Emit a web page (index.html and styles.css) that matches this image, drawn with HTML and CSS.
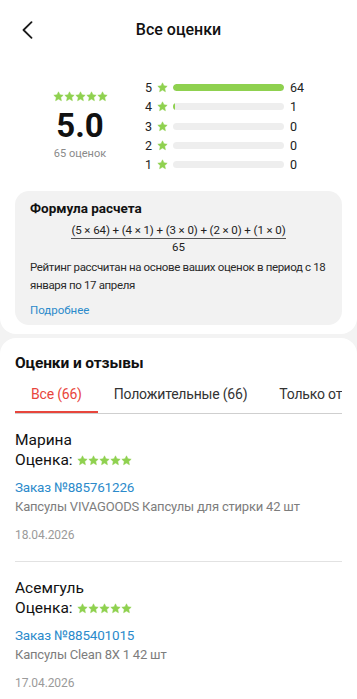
FILE: index.html
```html
<!DOCTYPE html>
<html lang="ru">
<head>
<meta charset="utf-8">
<title>Все оценки</title>
<link rel="stylesheet" href="styles.css">
</head>
<body>
<svg class="defs" width="0" height="0" aria-hidden="true">
  <defs>
    <symbol id="star" viewBox="0 0 24 24">
      <path d="M12 1.8l3.05 6.55 7.15.85-5.3 4.9 1.42 7.07L12 17.6l-6.32 3.57 1.42-7.07-5.3-4.9 7.15-.85z" stroke-linejoin="round" stroke-width="1.2" stroke="currentColor"/>
    </symbol>
  </defs>
</svg>

<div class="top">
  <header class="header">
    <svg class="back" width="12" height="18" viewBox="0 0 12 18"><path d="M10.5 1.2 2.5 9l8 7.8"/></svg>
    <h1 class="title">Все оценки</h1>
    <span></span>
  </header>

  <section class="summary">
    <div class="score">
      <div class="stars big">
        <svg><use href="#star"/></svg><svg><use href="#star"/></svg><svg><use href="#star"/></svg><svg><use href="#star"/></svg><svg><use href="#star"/></svg>
      </div>
      <div class="value">5.0</div>
      <div class="count">65 оценок</div>
    </div>
    <div class="dist">
      <div class="row"><span class="num">5</span><svg class="rstar"><use href="#star"/></svg><div class="track"><div class="fill" style="width:100%"></div></div><span class="cnt">64</span></div>
      <div class="row"><span class="num">4</span><svg class="rstar"><use href="#star"/></svg><div class="track"><div class="fill thin" style="width:2px"></div></div><span class="cnt">1</span></div>
      <div class="row"><span class="num">3</span><svg class="rstar"><use href="#star"/></svg><div class="track"></div><span class="cnt">0</span></div>
      <div class="row"><span class="num">2</span><svg class="rstar"><use href="#star"/></svg><div class="track"></div><span class="cnt">0</span></div>
      <div class="row"><span class="num">1</span><svg class="rstar"><use href="#star"/></svg><div class="track"></div><span class="cnt">0</span></div>
    </div>
  </section>

  <section class="formula">
    <h2 class="formula-title">Формула расчета</h2>
    <div class="fraction">
      <div class="numerator">(5 × 64) + (4 × 1) + (3 × 0) + (2 × 0) + (1 × 0)</div>
      <div class="denominator">65</div>
    </div>
    <p class="formula-text">Рейтинг рассчитан на основе ваших оценок в период с 18 января по 17 апреля</p>
    <a class="more">Подробнее</a>
  </section>
</div>

<div class="reviews">
  <h2 class="reviews-title">Оценки и отзывы</h2>
  <nav class="tabs">
    <span class="tab active">Все (66)</span>
    <span class="tab">Положительные (66)</span>
    <span class="tab">Только отзывы (12)</span>
  </nav>

  <article class="review">
    <div class="name">Марина</div>
    <div class="rating">Оценка:
      <span class="stars small"><svg><use href="#star"/></svg><svg><use href="#star"/></svg><svg><use href="#star"/></svg><svg><use href="#star"/></svg><svg><use href="#star"/></svg></span>
    </div>
    <a class="order">Заказ №885761226</a>
    <div class="product">Капсулы VIVAGOODS Капсулы для стирки 42 шт</div>
    <div class="date">18.04.2026</div>
  </article>

  <article class="review">
    <div class="name">Асемгуль</div>
    <div class="rating">Оценка:
      <span class="stars small"><svg><use href="#star"/></svg><svg><use href="#star"/></svg><svg><use href="#star"/></svg><svg><use href="#star"/></svg><svg><use href="#star"/></svg></span>
    </div>
    <a class="order">Заказ №885401015</a>
    <div class="product">Капсулы Clean 8X 1 42 шт</div>
    <div class="date">17.04.2026</div>
  </article>
</div>
</body>
</html>
```

FILE: styles.css
```css
* { box-sizing: border-box; }

html, body {
  margin: 0;
  padding: 0;
}

body {
  background: #f3f3f3;
  font-family: Roboto, "Noto Sans", "Liberation Sans", sans-serif;
  color: #111;
  width: 357px;
  height: 699px;
  overflow: hidden;
}

.defs { position: absolute; }

.top {
  background: #fff;
  border-radius: 0 0 16px 16px;
  padding-bottom: 9px;
}

.header {
  height: 60px;
  display: grid;
  grid-template-columns: 1fr auto 1fr;
  align-items: center;
  padding: 0 21px;
}

.back {
  fill: none;
  stroke: #1a1a1a;
  stroke-width: 1.8;
  stroke-linecap: round;
  stroke-linejoin: round;
}

.title {
  margin: 0;
  font-size: 16px;
  font-weight: 500;
  line-height: 20px;
  color: #111;
}

.summary {
  display: flex;
  align-items: center;
  padding: 18px 15px 0;
}

.score {
  width: 130px;
  display: flex;
  flex-direction: column;
  align-items: center;
}

.stars {
  display: inline-flex;
  color: #8fd14f;
}

.stars svg {
  fill: currentColor;
}

.stars.big svg {
  width: 11px;
  height: 11px;
}

.value {
  font-size: 33px;
  font-weight: 700;
  line-height: 36px;
  margin-top: 6px;
}

.count {
  font-size: 11px;
  line-height: 16px;
  color: #8a8a8a;
  margin-top: 2px;
}

.dist {
  display: flex;
  flex-direction: column;
}

.row {
  height: 19.3px;
  display: flex;
  align-items: center;
  font-size: 12.5px;
  color: #222;
}

.num {
  width: 8px;
}

.rstar {
  width: 11px;
  height: 11px;
  margin-left: 4px;
  fill: #8fd14f;
  color: #8fd14f;
}

.track {
  width: 111px;
  height: 7px;
  border-radius: 4px;
  background: #eeeeee;
  margin-left: 5px;
  overflow: hidden;
}

.fill {
  height: 100%;
  background: #8fd14f;
  border-radius: 4px;
}

.fill.thin {
  border-radius: 0;
}

.cnt {
  margin-left: 6px;
}

.formula {
  margin: 17px 15px 0;
  background: #f2f2f2;
  border-radius: 14px;
  padding: 8px 15px 6px;
}

.formula-title {
  margin: 0;
  font-size: 13.5px;
  font-weight: 700;
  line-height: 18px;
}

.fraction {
  display: flex;
  flex-direction: column;
  align-items: center;
  margin-top: 6px;
}

.numerator {
  font-size: 11.5px;
  letter-spacing: -0.1px;
  line-height: 15px;
  color: #222;
  border-bottom: 1px solid #555;
  white-space: nowrap;
}

.denominator {
  font-size: 11.5px;
  line-height: 16px;
  color: #222;
}

.formula-text {
  margin: 4px 0 0;
  font-size: 11.5px;
  letter-spacing: -0.35px;
  line-height: 17.5px;
  color: #2a2a2a;
}

.more {
  display: block;
  margin-top: 7px;
  font-size: 11.5px;
  line-height: 18px;
  color: #2b8acb;
}

.reviews {
  margin-top: 4px;
  background: #fff;
  border-radius: 16px 16px 0 0;
  padding: 14px 15px 0;
  min-height: 400px;
}

.reviews-title {
  margin: 0;
  font-size: 15.5px;
  letter-spacing: -0.1px;
  font-weight: 700;
  line-height: 22px;
}

.tabs {
  display: flex;
  margin-top: 10px;
  overflow: hidden;
  border-bottom: 1px solid #cfcfcf;
}

.tab {
  flex: none;
  padding: 0 16px 9px;
  font-size: 14px;
  letter-spacing: -0.2px;
  line-height: 20px;
  color: #333;
  white-space: nowrap;
}

.tab.active {
  color: #e8453c;
  box-shadow: inset 0 -3px 0 #e8453c;
  margin-bottom: -1px;
  padding-bottom: 10px;
}

.review {
  padding: 16px 0 16px;
  border-bottom: 1px solid #e2e2e2;
}

.name,
.rating {
  font-size: 15.5px;
  line-height: 20px;
  color: #111;
}

.rating {
  display: flex;
  align-items: center;
  gap: 4px;
}

.stars.small svg {
  width: 11px;
  height: 11px;
}

.order {
  display: block;
  margin-top: 7px;
  font-size: 13.5px;
  letter-spacing: -0.2px;
  line-height: 20px;
  color: #2b8acb;
}

.product {
  font-size: 13px;
  letter-spacing: -0.2px;
  line-height: 20px;
  color: #7d7d7d;
}

.date {
  margin-top: 8px;
  font-size: 12px;
  letter-spacing: -0.1px;
  line-height: 20px;
  color: #9a9a9a;
}
```
